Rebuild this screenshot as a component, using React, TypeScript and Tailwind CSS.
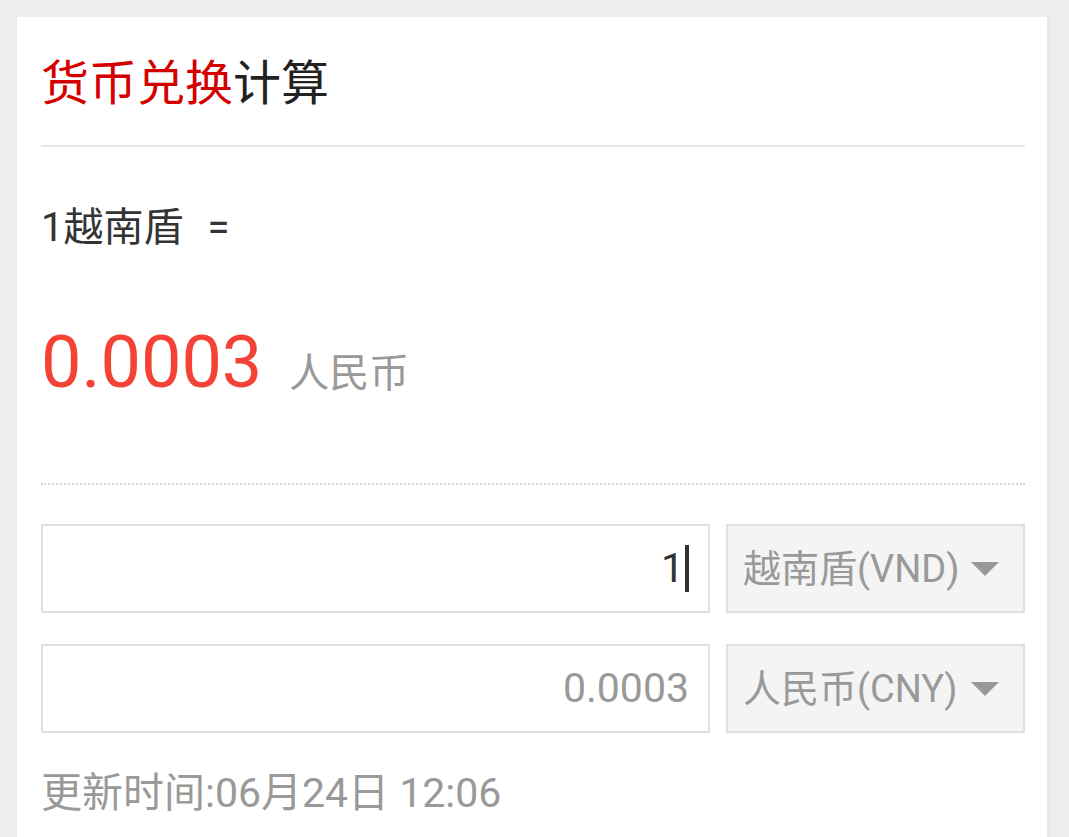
import { useState } from 'react';

const font = { fontFamily: 'Roboto, "Noto Sans CJK SC", sans-serif' };

function CurrencySelect({ label }: { label: string }) {
  return (
    <div className="flex h-[89px] w-[299px] shrink-0 items-center justify-between border-2 border-[#e0e0e0] bg-[#f4f4f4] pl-[15px] pr-[24px]">
      <span className="text-[38px] leading-none text-[#999999]">{label}</span>
      <svg width="28" height="14" viewBox="0 0 28 14" className="shrink-0">
        <path d="M0 0 L28 0 L14 14 Z" fill="#999999" />
      </svg>
    </div>
  );
}

export default function App() {
  const [amount] = useState('1');

  return (
    <div className="min-h-[837px] bg-[#ededed] pl-[17px] pr-[20px] pt-[17px]" style={font}>
      <div className="min-h-[820px] border-r-2 border-[#e6e6e6] bg-white pl-[24px] pr-[22px]">
        <div className="flex h-[128px] items-center pt-[5px]">
          <h1 className="text-[48px] font-normal leading-none">
            <span className="text-[#d40000]">货币兑换</span>
            <span className="text-[#222222]">计算</span>
          </h1>
        </div>
        <div className="h-[2px] bg-[#e6e6e6]" />

        <div className="mt-[56px] h-[50px] text-[40px] leading-[50px] text-[#333333]">
          1越南盾<span className="ml-[24px]">=</span>
        </div>

        <div className="mt-[70px] flex h-[80px] items-baseline">
          <span className="text-[72px] leading-[80px] text-[#f44336]">0.0003</span>
          <span className="ml-[27px] text-[40px] text-[#999999]">人民币</span>
        </div>

        <div className="mt-[80px] border-t-2 border-dotted border-[#d6d6d6]" />

        <div className="mt-[39px] flex flex-col gap-[31px]">
          <div className="flex gap-[16px]">
            <div className="flex h-[89px] flex-1 items-center justify-end border-2 border-[#e0e0e0] bg-white pr-[19px]">
              <span className="text-[41px] leading-none text-[#333333]">{amount}</span>
              <span className="ml-[1px] h-[47px] w-[4px] bg-[#333333]" />
            </div>
            <CurrencySelect label="越南盾(VND)" />
          </div>
          <div className="flex gap-[16px]">
            <div className="flex h-[89px] flex-1 items-center justify-end border-2 border-[#e0e0e0] bg-white pr-[19px]">
              <span className="text-[41px] leading-none text-[#999999]">0.0003</span>
            </div>
            <CurrencySelect label="人民币(CNY)" />
          </div>
        </div>

        <div className="mt-[35px] h-[50px] text-[41px] leading-[50px] text-[#999999]">
          更新时间:06月24日 12:06
        </div>
      </div>
    </div>
  );
}
